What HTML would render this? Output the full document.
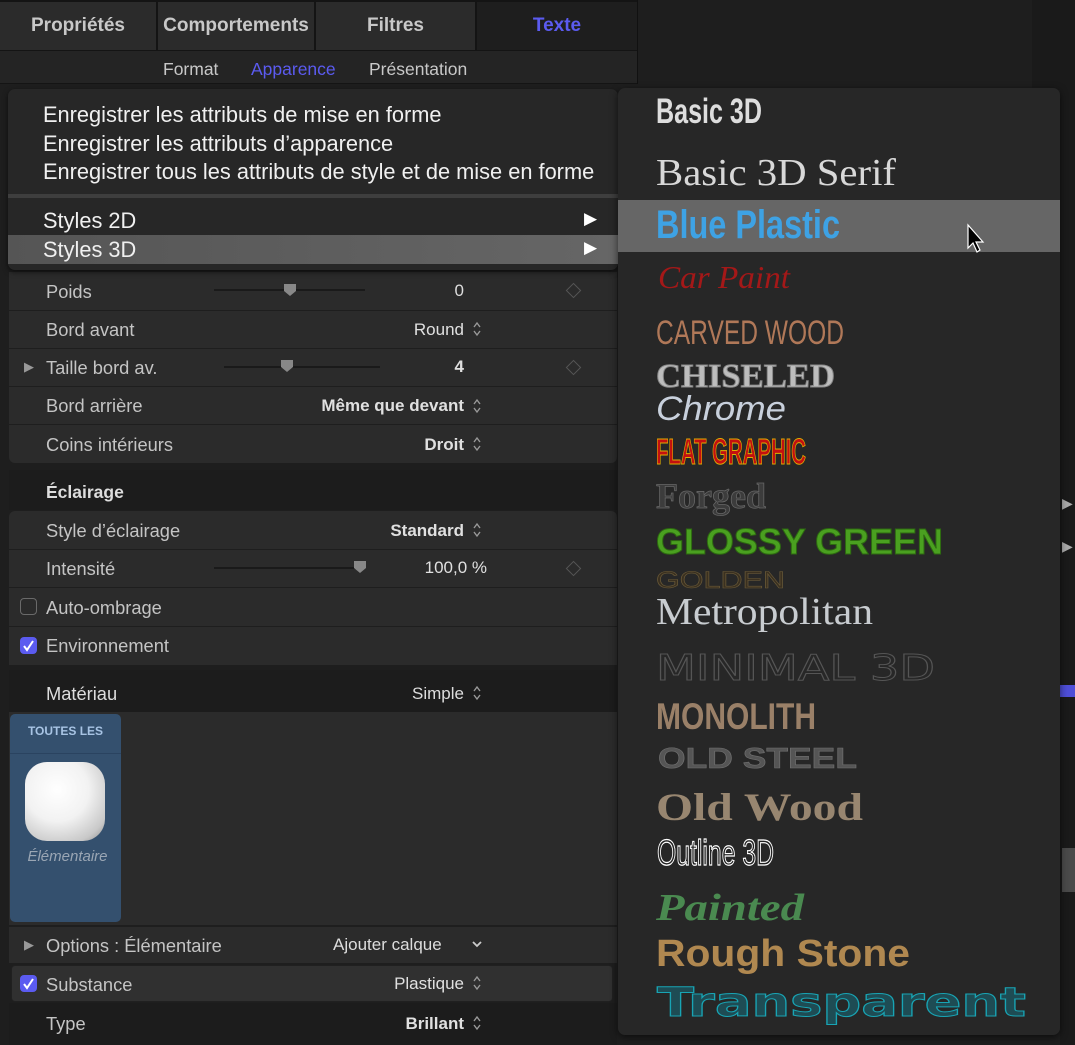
<!DOCTYPE html>
<html><head><meta charset="utf-8">
<style>
*{margin:0;padding:0;box-sizing:border-box}
body{width:1075px;height:1045px;background:#1e1e1e;font-family:"Liberation Sans",sans-serif;position:relative;overflow:hidden;color:#ccc}
.a{position:absolute}
.tab{position:absolute;top:2px;height:48px;background:#2b2b2b;color:#c8c8c8;font-size:19px;font-weight:bold;text-align:center;line-height:48px}
.row{position:absolute;left:9px;width:608px;background:#2b2b2b}
.hdr{position:absolute;left:9px;width:608px;background:#1c1c1c}
.lbl{position:absolute;left:46px;font-size:18.3px;color:#c4c4c4;white-space:nowrap}
.val{position:absolute;right:611px;font-size:17px;color:#e0e0e0;text-align:right;white-space:nowrap}
.st{position:absolute;left:471px;width:12px;height:18px}
.dia{position:absolute;left:568px;width:11px;height:11px;border:1.5px solid #555;transform:rotate(45deg)}
.trk{position:absolute;height:2px;background:#1a1a1a}
.th{position:absolute;width:14px;height:14px}
.cb{position:absolute;left:20px;width:17px;height:17px;border-radius:4px}
.mi{position:absolute;left:43px;font-size:21.8px;color:#f0f0f0;white-space:nowrap}
</style></head><body>
<!-- tabs -->
<div class="a" style="left:0;top:0;width:638px;height:84px;background:#141414"></div>
<div class="tab" style="left:0;width:156px">Propriétés</div>
<div class="tab" style="left:158px;width:156px">Comportements</div>
<div class="tab" style="left:316px;width:159px">Filtres</div>
<div class="tab" style="left:477px;width:160px;background:#1e1e1e;color:#5b5bf0">Texte</div>
<div class="a" style="left:0;top:51px;width:637px;height:32px;background:#242424"></div>
<div class="a" style="left:163px;top:59px;font-size:17.5px;color:#c8c8c8">Format</div>
<div class="a" style="left:251px;top:59px;font-size:17.5px;color:#5b5bf0">Apparence</div>
<div class="a" style="left:369px;top:59px;font-size:17.5px;color:#c8c8c8">Présentation</div>
<div class="a" style="left:637px;top:0;width:1px;height:84px;background:#111"></div>
<div class="a" style="left:1032px;top:0;width:43px;height:90px;background:#1a1a1a"></div>
<div class="a" style="left:1060px;top:0;width:15px;height:1045px;background:#1a1a1a"></div>
<div class="a" style="left:1060px;top:685px;width:15px;height:12px;background:#4f4fd8"></div>
<div class="a" style="left:1062px;top:848px;width:13px;height:44px;background:#4a4a4a"></div>
<div class="a" style="left:1062px;top:495px;width:13px;height:20px;color:#aaa;font-size:14px">▶</div>
<div class="a" style="left:1062px;top:538px;width:13px;height:20px;color:#aaa;font-size:14px">▶</div>

<!-- left panel rows -->
<div class="row" style="top:272px;height:38px"></div>
<div class="row" style="top:311px;height:37px"></div>
<div class="row" style="top:349px;height:37px"></div>
<div class="row" style="top:387px;height:37px"></div>
<div class="row" style="top:425px;height:38px;border-radius:0 0 6px 6px"></div>
<div class="hdr" style="top:470px;height:40px"></div>
<div class="row" style="top:511px;height:38px;border-radius:6px 6px 0 0"></div>
<div class="row" style="top:550px;height:37px"></div>
<div class="row" style="top:588px;height:38px"></div>
<div class="row" style="top:627px;height:38px"></div>
<div class="hdr" style="top:670px;height:42px"></div>
<div class="row" style="top:712px;height:213px"></div>
<div class="row" style="top:927px;height:36px"></div>
<div class="row" style="top:965px;height:37px;background:#303030;border:1px solid #202020;border-radius:4px;left:11px;width:602px"></div>
<div class="hdr" style="top:1003px;height:42px"></div>

<div class="lbl" style="top:281px">Poids</div>
<div class="trk" style="left:214px;top:289px;width:151px"></div>
<svg class="th" style="left:283px;top:283px" viewBox="0 0 14 14"><path d="M1 1H13V8L7 13L1 8Z" fill="#888"/></svg>
<div class="val" style="top:281px;color:#ddd">0</div>
<div class="dia" style="top:285px"></div>

<div class="lbl" style="top:319px">Bord avant</div>
<div class="val" style="top:320px">Round</div>

<div class="a" style="left:24px;top:359px;font-size:13px;color:#999">▶</div>
<div class="lbl" style="top:357px">Taille bord av.</div>
<div class="trk" style="left:224px;top:366px;width:156px"></div>
<svg class="th" style="left:280px;top:359px" viewBox="0 0 14 14"><path d="M1 1H13V8L7 13L1 8Z" fill="#888"/></svg>
<div class="val" style="top:357px;font-weight:bold">4</div>
<div class="dia" style="top:362px"></div>

<div class="lbl" style="top:395px">Bord arrière</div>
<div class="val" style="top:396px;font-weight:bold">Même que devant</div>
<div class="lbl" style="top:434px">Coins intérieurs</div>
<div class="val" style="top:435px;font-weight:bold">Droit</div>

<div class="lbl" style="top:482px;font-weight:bold;color:#ddd;font-size:17.5px">Éclairage</div>
<div class="lbl" style="top:520px">Style d’éclairage</div>
<div class="val" style="top:521px;font-weight:bold">Standard</div>
<div class="lbl" style="top:558px">Intensité</div>
<div class="trk" style="left:214px;top:567px;width:150px"></div>
<svg class="th" style="left:353px;top:560px" viewBox="0 0 14 14"><path d="M1 1H13V8L7 13L1 8Z" fill="#888"/></svg>
<div class="val" style="top:558px;right:588px">100,0 %</div>
<div class="dia" style="top:563px"></div>
<div class="cb" style="top:598px;border:1.5px solid #6a6a6a"></div>
<div class="lbl" style="top:597px">Auto-ombrage</div>
<div class="cb" style="top:637px;background:#5b5bf0"></div>
<svg class="a" style="left:22px;top:639px" width="13" height="13" viewBox="0 0 13 13"><path d="M2 7L5 11L11 2" stroke="#fff" stroke-width="2" fill="none"/></svg>
<div class="lbl" style="top:635px">Environnement</div>

<div class="lbl" style="top:683px;color:#ddd">Matériau</div>
<div class="val" style="top:684px;color:#ddd">Simple</div>

<div class="a" style="left:10px;top:714px;width:111px;height:208px;background:#34506e;border-radius:5px"></div>
<div class="a" style="left:10px;top:753px;width:111px;height:1px;background:#2a4360"></div>
<div class="a" style="left:10px;top:724px;width:111px;text-align:center;font-size:12px;font-weight:bold;color:#a8c4e4">TOUTES LES</div>
<div class="a" style="left:25px;top:762px;width:80px;height:79px;border-radius:22px;background:radial-gradient(circle at 40% 35%,#fff 0%,#f2f2f2 45%,#c8c8c8 80%,#8a8a8a 100%)"></div>
<div class="a" style="left:10px;top:848px;width:115px;text-align:center;font-size:15px;font-style:italic;color:#9aa6b4">Élémentaire</div>

<div class="a" style="left:24px;top:937px;font-size:13px;color:#999">▶</div>
<div class="lbl" style="top:935px">Options : Élémentaire</div>
<div class="a" style="left:333px;top:935px;font-size:17px;color:#ddd">Ajouter calque</div>
<svg class="a" style="left:471px;top:940px" width="12" height="9" viewBox="0 0 12 9"><path d="M2 2L6 6L10 2" stroke="#ccc" stroke-width="1.8" fill="none"/></svg>
<div class="cb" style="top:975px;background:#5b5bf0"></div>
<svg class="a" style="left:22px;top:977px" width="13" height="13" viewBox="0 0 13 13"><path d="M2 7L5 11L11 2" stroke="#fff" stroke-width="2" fill="none"/></svg>
<div class="lbl" style="top:974px">Substance</div>
<div class="val" style="top:974px">Plastique</div>
<div class="lbl" style="top:1013px">Type</div>
<div class="val" style="top:1014px;font-weight:bold">Brillant</div>

<!-- steppers -->
<svg class="st" style="top:320px" viewBox="0 0 12 18"><path d="M3 7L6 3L9 7M3 11L6 15L9 11" stroke="#999" stroke-width="1.4" fill="none"/></svg>
<svg class="st" style="top:397px" viewBox="0 0 12 18"><path d="M3 7L6 3L9 7M3 11L6 15L9 11" stroke="#999" stroke-width="1.4" fill="none"/></svg>
<svg class="st" style="top:435px" viewBox="0 0 12 18"><path d="M3 7L6 3L9 7M3 11L6 15L9 11" stroke="#999" stroke-width="1.4" fill="none"/></svg>
<svg class="st" style="top:521px" viewBox="0 0 12 18"><path d="M3 7L6 3L9 7M3 11L6 15L9 11" stroke="#999" stroke-width="1.4" fill="none"/></svg>
<svg class="st" style="top:684px" viewBox="0 0 12 18"><path d="M3 7L6 3L9 7M3 11L6 15L9 11" stroke="#999" stroke-width="1.4" fill="none"/></svg>
<svg class="st" style="top:974px" viewBox="0 0 12 18"><path d="M3 7L6 3L9 7M3 11L6 15L9 11" stroke="#999" stroke-width="1.4" fill="none"/></svg>
<svg class="st" style="top:1014px" viewBox="0 0 12 18"><path d="M3 7L6 3L9 7M3 11L6 15L9 11" stroke="#999" stroke-width="1.4" fill="none"/></svg>

<!-- main popup menu -->
<div class="a" style="left:8px;top:89px;width:610px;height:181px;background:#272727;border-radius:7px;box-shadow:0 2px 6px rgba(0,0,0,.6)"></div>
<div class="mi" style="top:102px">Enregistrer les attributs de mise en forme</div>
<div class="mi" style="top:131px">Enregistrer les attributs d’apparence</div>
<div class="mi" style="top:159px">Enregistrer tous les attributs de style et de mise en forme</div>
<div class="a" style="left:8px;top:194px;width:610px;height:4px;background:#3e3e3e"></div>
<div class="mi" style="top:208px">Styles 2D</div>
<div class="a" style="left:8px;top:235px;width:610px;height:29px;background:linear-gradient(90deg,#555,#666)"></div>
<div class="mi" style="top:237px">Styles 3D</div>
<div class="a" style="left:584px;top:209px;font-size:17px;color:#fff">▶</div>
<div class="a" style="left:584px;top:238px;font-size:17px;color:#fff">▶</div>

<!-- submenu -->
<div class="a" style="left:618px;top:88px;width:442px;height:947px;background:#272727;border-radius:7px;box-shadow:0 2px 8px rgba(0,0,0,.6)"></div>
<div class="a" style="left:618px;top:200px;width:442px;height:52px;background:#666"></div>
<svg class="a" style="left:0;top:0" width="1075" height="1045">
<text x="656" y="123" font-family="Liberation Sans" font-weight="bold" font-size="35" fill="#ddd" textLength="106" lengthAdjust="spacingAndGlyphs">Basic 3D</text>
<text x="656" y="185" font-family="Liberation Serif" font-size="38" fill="#d8d8d8" textLength="240" lengthAdjust="spacingAndGlyphs">Basic 3D Serif</text>
<text x="656" y="238" font-family="Liberation Sans" font-weight="bold" font-size="40" fill="#3ea2e4" textLength="184" lengthAdjust="spacingAndGlyphs">Blue Plastic</text>
<text x="658" y="288" font-family="Liberation Serif" font-style="italic" font-size="32" fill="#a41818" textLength="132" lengthAdjust="spacingAndGlyphs">Car Paint</text>
<text x="656" y="344" font-family="Liberation Sans" font-size="34" fill="#b07858" textLength="188" lengthAdjust="spacingAndGlyphs">CARVED WOOD</text>
<text x="656" y="387" font-family="Liberation Serif" font-weight="bold" font-size="34" fill="#bdbdbd" stroke="#888" stroke-width="1" textLength="179" lengthAdjust="spacingAndGlyphs">CHISELED</text>
<text x="656" y="420" font-family="Liberation Sans" font-style="italic" font-size="34" fill="#c8d0dc" textLength="130" lengthAdjust="spacingAndGlyphs">Chrome</text>
<text x="656" y="464" font-family="Liberation Sans" font-weight="bold" font-size="36" fill="#c41010" stroke="#e0b000" stroke-width="1" textLength="150" lengthAdjust="spacingAndGlyphs">FLAT GRAPHIC</text>
<text x="656" y="508" font-family="Liberation Serif" font-weight="bold" font-size="36" fill="#3c3c3c" stroke="#666" stroke-width="0.8" textLength="110" lengthAdjust="spacingAndGlyphs">Forged</text>
<text x="656" y="554" font-family="Liberation Sans" font-weight="bold" font-size="36" fill="#4aa020" stroke="#2d6a10" stroke-width="1" textLength="287" lengthAdjust="spacingAndGlyphs">GLOSSY GREEN</text>
<text x="656" y="588" font-family="Liberation Sans" font-size="24" fill="#3a3020" stroke="#6a5a38" stroke-width="0.6" textLength="129" lengthAdjust="spacingAndGlyphs">GOLDEN</text>
<text x="656" y="624" font-family="Liberation Serif" font-size="38" fill="#c8ccd0" textLength="217" lengthAdjust="spacingAndGlyphs">Metropolitan</text>
<text x="656" y="680" font-family="DejaVu Sans" font-size="36" fill="none" stroke="#555" stroke-width="1" textLength="279" lengthAdjust="spacingAndGlyphs">MINIMAL 3D</text>
<text x="656" y="729" font-family="Liberation Sans" font-weight="bold" font-size="37" fill="#9a8068" textLength="160" lengthAdjust="spacingAndGlyphs">MONOLITH</text>
<text x="658" y="768" font-family="Liberation Sans" font-weight="bold" font-size="29" fill="#555" stroke="#707070" stroke-width="0.6" textLength="199" lengthAdjust="spacingAndGlyphs">OLD STEEL</text>
<text x="656" y="820" font-family="Liberation Serif" font-weight="bold" font-size="39" fill="#988670" textLength="207" lengthAdjust="spacingAndGlyphs">Old Wood</text>
<text x="657" y="865" font-family="Liberation Sans" font-size="36" fill="#222" stroke="#fff" stroke-width="1.2" textLength="117" lengthAdjust="spacingAndGlyphs">Outline 3D</text>
<text x="656" y="920" font-family="Liberation Serif" font-weight="bold" font-style="italic" font-size="38" fill="#4a8a50" textLength="148" lengthAdjust="spacingAndGlyphs">Painted</text>
<text x="656" y="966" font-family="Liberation Sans" font-weight="bold" font-size="38" fill="#b08850" textLength="254" lengthAdjust="spacingAndGlyphs">Rough Stone</text>
<text x="657" y="1016" font-family="DejaVu Sans" font-weight="bold" font-size="40" fill="#1e4c54" stroke="#18a4b4" stroke-width="1" textLength="369" lengthAdjust="spacingAndGlyphs">Transparent</text>
<path d="M968 225L968 248L973 243L977 252L980 250L976 242L983 242Z" fill="#000" stroke="#fff" stroke-width="1.2"/>
</svg>
</body></html>
